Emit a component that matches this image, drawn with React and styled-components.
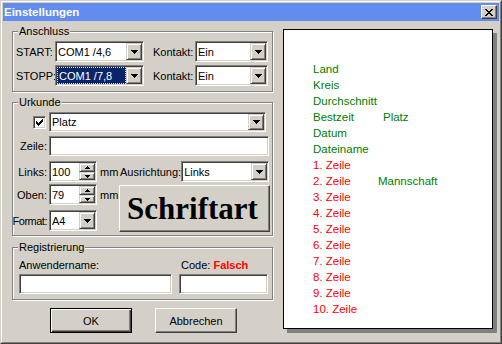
import React from 'react';
import styled, { createGlobalStyle, css } from 'styled-components';

const face = '#d4d0c8';

const Global = createGlobalStyle`
  html, body { margin: 0; padding: 0; background: ${face}; }
  body { font-family: "Liberation Sans", Arial, sans-serif; font-size: 11px; color: #000; }
  * { box-sizing: border-box; }
`;

const sunken = css`
  border: 1px solid;
  border-color: #808080 #fff #fff #808080;
  box-shadow: inset 1px 1px 0 #404040, inset -1px -1px 0 ${face};
  background: #fff;
`;

const Window = styled.div`
  width: 502px;
  height: 344px;
  border: 1px solid;
  border-color: ${face} #404040 #404040 ${face};
  display: flex;
`;

const WindowInner = styled.div`
  flex: 1;
  border: 1px solid;
  border-color: #fff #808080 #808080 #fff;
  padding: 1px;
  display: flex;
  flex-direction: column;
`;

const TitleBar = styled.div`
  height: 18px;
  background: #638cef;
  display: flex;
  align-items: center;
  padding: 0 1px 0 1px;
`;

const TitleText = styled.div`
  color: #fff;
  font-weight: bold;
  font-size: 11.5px;
  flex: 1;
`;

const CloseButton = styled.div`
  width: 16px;
  height: 14px;
  background: ${face};
  border: 1px solid;
  border-color: #fff #404040 #404040 #fff;
  box-shadow: inset -1px -1px 0 #808080;
  display: flex;
  align-items: center;
  justify-content: center;
  margin-right: 1px;
`;

const Body = styled.div`
  flex: 1;
  display: flex;
  padding-left: 9px;
`;

const LeftCol = styled.div`
  width: 261px;
  margin-top: 10px;
  display: flex;
  flex-direction: column;
`;

const GroupBox = styled.div`
  position: relative;
  border: 1px solid #808080;
  box-shadow: inset 1px 1px 0 #fff, 1px 1px 0 #fff;
  margin-top: ${(p) => p.$mt || 0}px;
  padding: ${(p) => p.$pad};
`;

const Legend = styled.span`
  position: absolute;
  top: -7px;
  left: 5px;
  padding: 0 1px;
  line-height: 13px;
  background: ${face};
`;

const Row = styled.div`
  display: flex;
  align-items: center;
  height: ${(p) => p.$h || 21}px;
  margin-top: ${(p) => p.$mt || 0}px;
`;

const Label = styled.div`
  width: ${(p) => (p.$w ? `${p.$w}px` : 'auto')};
  margin-left: ${(p) => p.$ml || 0}px;
  white-space: nowrap;
  flex-shrink: 0;
`;

const LabelCell = styled.div`
  width: 34px;
  margin-right: 2px;
  display: flex;
  justify-content: flex-end;
  align-items: center;
  white-space: nowrap;
  flex-shrink: 0;
  letter-spacing: ${(p) => (p.$tight ? '-0.5px' : 'normal')};
`;

const ComboBox = styled.div`
  ${sunken};
  width: ${(p) => p.$w}px;
  height: ${(p) => p.$h || 21}px;
  padding: 1px;
  display: flex;
  flex-shrink: 0;
`;

const ComboText = styled.div`
  flex: 1;
  display: flex;
  align-items: center;
  padding-left: ${(p) => (p.$selected ? 2 : 1)}px;
  white-space: nowrap;
  overflow: hidden;
  background: ${(p) => (p.$selected ? '#0a246a' : 'transparent')};
  color: ${(p) => (p.$selected ? '#fff' : '#000')};
  outline: ${(p) => (p.$selected ? '1px dotted #f5db95' : 'none')};
  outline-offset: -1px;
`;

const ArrowButton = styled.div`
  width: 16px;
  flex-shrink: 0;
  height: ${(p) => (p.$h ? `${p.$h}px` : '100%')};
  background: ${face};
  border: 1px solid;
  border-color: ${face} #404040 #404040 ${face};
  box-shadow: inset 1px 1px 0 #fff, inset -1px -1px 0 #808080;
  display: flex;
  align-items: center;
  justify-content: center;
`;

const SpinButtons = styled.div`
  display: flex;
  flex-direction: column;
  width: 16px;
  flex-shrink: 0;
`;

const TextInput = styled.div`
  ${sunken};
  width: ${(p) => p.$w}px;
  height: ${(p) => p.$h || 20}px;
  flex-shrink: 0;
`;

const CheckBox = styled.div`
  ${sunken};
  width: 13px;
  height: 13px;
  margin-right: 1px;
  display: flex;
  align-items: center;
  justify-content: center;
`;

const Unit = styled.div`
  width: 17px;
  margin-left: 3px;
  flex-shrink: 0;
`;

const LowerArea = styled.div`
  display: flex;
  align-items: flex-start;
  margin-top: 2px;
`;

const LowerLeft = styled.div`
  display: flex;
  flex-direction: column;
`;

const BigButton = styled.div`
  width: 151px;
  height: 47px;
  margin-top: 1px;
  margin-left: 2px;
  background: ${face};
  border: 1px solid;
  border-color: #fff #404040 #404040 #fff;
  box-shadow: inset -1px -1px 0 #808080;
  display: flex;
  align-items: center;
  justify-content: center;
  font-family: "Liberation Serif", "Times New Roman", serif;
  font-weight: bold;
  font-size: 31px;
  padding-right: 4px;
`;

const RegGrid = styled.div`
  display: grid;
  grid-template-columns: 153px 89px;
  grid-template-rows: 13px 20px;
  column-gap: 7px;
  row-gap: 2px;
  line-height: 13px;
`;

const CodeLabel = styled.div`
  padding-left: 2px;
  white-space: nowrap;
`;

const Falsch = styled.span`
  color: #ff0000;
  font-weight: bold;
`;

const ButtonRow = styled.div`
  display: flex;
  gap: 23px;
  margin-top: 8px;
  padding-left: 38px;
`;

const PushButton = styled.div`
  width: 82px;
  height: 25px;
  background: ${face};
  display: flex;
  align-items: center;
  justify-content: center;
  border: 1px solid;
  ${(p) =>
    p.$default
      ? css`
          border-color: #000;
          box-shadow: inset 1px 1px 0 #fff, inset -1px -1px 0 #404040, inset -2px -2px 0 #808080;
        `
      : css`
          border-color: #fff #404040 #404040 #fff;
          box-shadow: inset -1px -1px 0 #808080;
        `}
`;

const Preview = styled.div`
  width: 210px;
  height: 300px;
  margin-top: 8px;
  margin-left: 10px;
  background: #fff;
  border: 1px solid #000;
  box-shadow: 4px 4px 0 #808080;
  padding: 31px 0 0 29px;
  font-family: "Liberation Sans", Arial, sans-serif;
  font-size: 11.5px;
  line-height: 16px;
`;

const PreviewLine = styled.div`
  position: relative;
  height: 16px;
  white-space: nowrap;
  color: ${(p) => (p.$red ? '#ff0000' : '#008000')};
`;

const PreviewExtra = styled.span`
  position: absolute;
  top: 0;
  left: ${(p) => p.$x}px;
  color: #008000;
`;

const DownArrow = () => (
  <svg width="7" height="4" viewBox="0 0 7 4" shapeRendering="crispEdges">
    <path d="M0 0h7v1H0zM1 1h5v1H1zM2 2h3v1H2zM3 3h1v1H3z" fill="#000" />
  </svg>
);

const SmallArrow = ({ up }) => (
  <svg width="5" height="3" viewBox="0 0 5 3" shapeRendering="crispEdges">
    {up ? (
      <path d="M2 0h1v1H2zM1 1h3v1H1zM0 2h5v1H0z" fill="#000" />
    ) : (
      <path d="M0 0h5v1H0zM1 1h3v1H1zM2 2h1v1H2z" fill="#000" />
    )}
  </svg>
);

const CloseGlyph = () => (
  <svg width="8" height="7" viewBox="0 0 8 7" shapeRendering="crispEdges">
    <path
      d="M0 0h2v1H0zM6 0h2v1H6zM1 1h2v1H1zM5 1h2v1H5zM2 2h4v1H2zM3 3h2v1H3zM2 4h4v1H2zM1 5h2v1H1zM5 5h2v1H5zM0 6h2v1H0zM6 6h2v1H6z"
      fill="#000"
    />
  </svg>
);

const CheckGlyph = () => (
  <svg width="7" height="7" viewBox="0 0 7 7" shapeRendering="crispEdges">
    <path
      d="M6 0h1v1H6zM5 1h2v1H5zM0 2h1v1H0zM4 2h3v1H4zM0 3h2v1H0zM3 3h3v1H3zM0 4h5v1H0zM1 5h3v1H1zM2 6h1v1H2z"
      fill="#000"
    />
  </svg>
);

const Combo = ({ w, h, value, selected }) => (
  <ComboBox $w={w} $h={h}>
    <ComboText $selected={selected}>{value}</ComboText>
    <ArrowButton>
      <DownArrow />
    </ArrowButton>
  </ComboBox>
);

const Spin = ({ value }) => (
  <ComboBox $w={48}>
    <ComboText>{value}</ComboText>
    <SpinButtons>
      <ArrowButton $h={9}>
        <SmallArrow up />
      </ArrowButton>
      <ArrowButton $h={8}>
        <SmallArrow />
      </ArrowButton>
    </SpinButtons>
  </ComboBox>
);

const previewLines = [
  { t: 'Land' },
  { t: 'Kreis' },
  { t: 'Durchschnitt' },
  { t: 'Bestzeit', extra: 'Platz', x: 70 },
  { t: 'Datum' },
  { t: 'Dateiname' },
  { t: '1. Zeile', red: true },
  { t: '2. Zeile', red: true, extra: 'Mannschaft', x: 65 },
  { t: '3. Zeile', red: true },
  { t: '4. Zeile', red: true },
  { t: '5. Zeile', red: true },
  { t: '6. Zeile', red: true },
  { t: '7. Zeile', red: true },
  { t: '8. Zeile', red: true },
  { t: '9. Zeile', red: true },
  { t: '10. Zeile', red: true },
];

export default function App() {
  return (
    <>
      <Global />
      <Window>
        <WindowInner>
          <TitleBar>
            <TitleText>Einstellungen</TitleText>
            <CloseButton>
              <CloseGlyph />
            </CloseButton>
          </TitleBar>
          <Body>
            <LeftCol>
              <GroupBox $pad="9px 0 5px 3px">
                <Legend>Anschluss</Legend>
                <Row>
                  <Label $w={39}>START:</Label>
                  <Combo w={89} value="COM1 /4,6" />
                  <Label $w={42} $ml={9}>Kontakt:</Label>
                  <Combo w={73} value="Ein" />
                </Row>
                <Row $mt={3}>
                  <Label $w={39}>STOPP:</Label>
                  <Combo w={89} value="COM1 /7,8" selected />
                  <Label $w={42} $ml={9}>Kontakt:</Label>
                  <Combo w={73} value="Ein" />
                </Row>
              </GroupBox>

              <GroupBox $mt={10} $pad="9px 0 3px 0">
                <Legend>Urkunde</Legend>
                <Row $h={20}>
                  <LabelCell>
                    <CheckBox>
                      <CheckGlyph />
                    </CheckBox>
                  </LabelCell>
                  <Combo w={217} h={20} value="Platz" />
                </Row>
                <Row $h={20} $mt={4}>
                  <LabelCell>Zeile:</LabelCell>
                  <TextInput $w={220} />
                </Row>
                <Row $mt={5}>
                  <LabelCell>Links:</LabelCell>
                  <Spin value="100" />
                  <Unit>mm</Unit>
                  <Label $ml={3}>Ausrichtung:</Label>
                  <Combo w={88} value="Links" />
                </Row>
                <LowerArea>
                  <LowerLeft>
                    <Row>
                      <LabelCell>Oben:</LabelCell>
                      <Spin value="79" />
                      <Unit>mm</Unit>
                    </Row>
                    <Row $mt={5}>
                      <LabelCell $tight>Format:</LabelCell>
                      <Combo w={48} value="A4" />
                    </Row>
                  </LowerLeft>
                  <BigButton>Schriftart</BigButton>
                </LowerArea>
              </GroupBox>

              <GroupBox $mt={11} $pad="11px 0 5px 6px">
                <Legend>Registrierung</Legend>
                <RegGrid>
                  <div>Anwendername:</div>
                  <CodeLabel>
                    Code: <Falsch>Falsch</Falsch>
                  </CodeLabel>
                  <TextInput $w={153} />
                  <TextInput $w={89} />
                </RegGrid>
              </GroupBox>

              <ButtonRow>
                <PushButton $default>OK</PushButton>
                <PushButton>Abbrechen</PushButton>
              </ButtonRow>
            </LeftCol>

            <Preview>
              {previewLines.map((l) => (
                <PreviewLine key={l.t} $red={l.red}>
                  {l.t}
                  {l.extra && <PreviewExtra $x={l.x}>{l.extra}</PreviewExtra>}
                </PreviewLine>
              ))}
            </Preview>
          </Body>
        </WindowInner>
      </Window>
    </>
  );
}
